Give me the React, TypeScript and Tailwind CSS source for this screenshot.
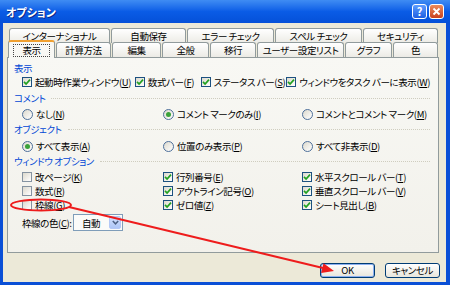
import clsx from 'clsx';

// label text with "&X" marking the mnemonic letter
function Mn({ t }: { t: string }) {
  const i = t.indexOf('&');
  if (i < 0) return <>{t}</>;
  return (
    <>
      {t.slice(0, i)}
      <span className="underline">{t[i + 1]}</span>
      {t.slice(i + 2)}
    </>
  );
}

function Check({ label, on, className }: { label: string; on?: boolean; className?: string }) {
  return (
    <div className={clsx('flex items-center gap-[3px]', className)}>
      <span
        className={clsx(
          'flex h-[10px] w-[10px] shrink-0 items-center justify-center border bg-linear-to-br from-[#dcd9cd] to-white',
          on ? 'border-[#1c5180]' : 'border-[#8593a1]'
        )}
      >
        {on && (
          <svg width="8" height="8" viewBox="0 0 8 8">
            <path d="M1 3.8 L3.1 6 L7 1.6" fill="none" stroke="#21a121" strokeWidth="1.7" />
          </svg>
        )}
      </span>
      <span className="whitespace-nowrap">
        <Mn t={label} />
      </span>
    </div>
  );
}

function Radio({ label, on, className }: { label: string; on?: boolean; className?: string }) {
  return (
    <div className={clsx('flex items-center gap-[3px]', className)}>
      <span className="flex h-[11px] w-[11px] shrink-0 items-center justify-center rounded-full border border-[#4d6f9a] bg-linear-to-br from-[#dcd9cd] to-white">
        {on && <span className="h-[5px] w-[5px] rounded-full bg-[#3aa23a]" />}
      </span>
      <span className="whitespace-nowrap">
        <Mn t={label} />
      </span>
    </div>
  );
}

function Group({ label, line = true, className }: { label: string; line?: boolean; className?: string }) {
  return (
    <div className={clsx('flex h-[14px] items-center gap-[6px] text-[#0046d5]', className)}>
      <span className="whitespace-nowrap">{label}</span>
      {line && <span className="flex-1 border-t border-dotted border-[#cfcdbf]" />}
    </div>
  );
}

const backTabs = [
  { label: 'インターナショナル', w: 'w-[101px]' },
  { label: '自動保存', w: 'w-[75px]' },
  { label: 'エラー チェック', w: 'w-[87px]' },
  { label: 'スペル チェック', w: 'w-[87px]' },
  { label: 'セキュリティ', w: 'w-[75px]' },
];

const frontTabs = [
  { label: '計算方法', w: 'w-[55px]' },
  { label: '編集', w: 'w-[49px]' },
  { label: '全般', w: 'w-[47px]' },
  { label: '移行', w: 'w-[46px]' },
  { label: 'ユーザー設定リスト', w: 'w-[87px]' },
  { label: 'グラフ', w: 'w-[47px]' },
  { label: '色', w: 'w-[45px]' },
];

const tabBase =
  'flex items-center justify-center whitespace-nowrap rounded-t-[3px] border border-b-0 border-[#919b9c] bg-linear-to-b from-white to-[#ecebe5]';

export default function App() {
  return (
    <div className="relative flex h-[285px] w-[450px] flex-col overflow-hidden bg-[#0a4fd6] font-['Noto_Sans_CJK_JP','Noto_Sans',sans-serif] text-[9.5px] leading-[14px] tracking-[-0.4px] text-black [font-feature-settings:'palt']">
      {/* Title bar */}
      <div className="flex h-[23px] shrink-0 items-center bg-linear-to-b from-[#3f8cf3] via-[#0a5ce6] to-[#0550d8] pl-[6px] pr-[6px]">
        <span className="flex-1 text-[11px] font-bold tracking-normal text-white [text-shadow:1px_1px_0_#0b2a8a]">オプション</span>
        <div className="flex gap-[2px]">
          <span className="flex h-[15px] w-[15px] items-center justify-center rounded-[3px] border border-white bg-linear-to-b from-[#5d9cff] to-[#1f5fe2] text-[11px] font-bold leading-none text-white">
            ?
          </span>
          <span className="flex h-[15px] w-[15px] items-center justify-center rounded-[3px] border border-white bg-linear-to-b from-[#eb8b5c] to-[#c8401c]">
            <svg width="9" height="9" viewBox="0 0 9 9">
              <path d="M1.5 1.5 L7.5 7.5 M7.5 1.5 L1.5 7.5" stroke="white" strokeWidth="1.8" />
            </svg>
          </span>
        </div>
      </div>

      {/* Dialog body */}
      <div className="ml-[3px] mr-[4px] flex h-[259px] flex-col bg-[#ece9d8] pt-[5px]">
        {/* back tab row */}
        <div className="flex h-[14px] gap-px pl-[6px]">
          {backTabs.map((t) => (
            <div key={t.label} className={clsx(tabBase, t.w, 'h-[15px]')}>
              {t.label}
            </div>
          ))}
        </div>
        {/* front tab row */}
        <div className="relative flex h-[15px] items-end gap-px pl-[5px]">
          <div className="relative z-10 mb-[-1px] flex h-[18px] w-[47px] items-center justify-center rounded-t-[3px] border-x border-t-2 border-[#919b9c] border-t-[#f0a030] bg-[#f8f8f4]">
            <span className="border border-dotted border-[#444] px-[8px] leading-[11px]">表示</span>
          </div>
          {frontTabs.map((t) => (
            <div key={t.label} className={clsx(tabBase, t.w, 'h-[15px]')}>
              {t.label}
            </div>
          ))}
        </div>

        {/* Tab page */}
        <div className="ml-[4px] flex h-[196px] w-[432px] flex-col border border-[#919b9c] bg-linear-to-b from-[#f8f8f4] to-[#f2f1eb] pl-[6px] pr-[8px] pt-[3px]">
          <Group label="表示" line={false} />
          <div className="flex h-[14px] items-center pl-[8px]">
            <Check on label="起動時作業ウィンドウ(&U)" className="w-[120px]" />
            <Check on label="数式バー(&F)" className="w-[70px]" />
            <Check on label="ステータス バー(&S)" className="w-[91px]" />
            <Check on label="ウィンドウをタスク バーに表示(&W)" />
          </div>

          <Group label="コメント" className="mt-[2px]" />
          <div className="mt-[2px] flex h-[14px] items-center pl-[8px]">
            <Radio label="なし(&N)" className="w-[141px]" />
            <Radio on label="コメント マークのみ(&I)" className="w-[139px]" />
            <Radio label="コメントとコメント マーク(&M)" />
          </div>

          <Group label="オブジェクト" className="mt-px" />
          <div className="mt-[3px] flex h-[14px] items-center pl-[8px]">
            <Radio on label="すべて表示(&A)" className="w-[141px]" />
            <Radio label="位置のみ表示(&P)" className="w-[139px]" />
            <Radio label="すべて非表示(&D)" />
          </div>

          <Group label="ウィンドウ オプション" className="mt-px" />
          <div className="mt-[2px] flex pl-[8px]">
            <div className="flex w-[141px] flex-col">
              <Check label="改ページ(&K)" className="h-[14px]" />
              <Check label="数式(&R)" className="h-[14px]" />
              <Check label="枠線(&G)" className="h-[14px]" />
            </div>
            <div className="flex w-[139px] flex-col">
              <Check on label="行列番号(&E)" className="h-[14px]" />
              <Check on label="アウトライン記号(&O)" className="h-[14px]" />
              <Check on label="ゼロ値(&Z)" className="h-[14px]" />
            </div>
            <div className="flex flex-col">
              <Check on label="水平スクロール バー(&T)" className="h-[14px]" />
              <Check on label="垂直スクロール バー(&V)" className="h-[14px]" />
              <Check on label="シート見出し(&B)" className="h-[14px]" />
            </div>
          </div>

          <div className="mt-[2px] flex h-[17px] items-center pl-[8px]">
            <span className="w-[51px] whitespace-nowrap">
              <Mn t="枠線の色(&C):" />
            </span>
            <div className="flex h-[17px] w-[50px] items-center border border-[#7f9db9] bg-[#fbfbf9]">
              <span className="flex-1 pl-[8px]">自動</span>
              <span className="mr-px flex h-[13px] w-[12px] items-center justify-center rounded-[2px] border border-[#b4c8f6] bg-linear-to-b from-[#d2e0fd] to-[#aec6f6]">
                <svg width="7" height="5" viewBox="0 0 7 5">
                  <path d="M0.8 1 L3.5 3.8 L6.2 1" fill="none" stroke="#4d6185" strokeWidth="1.5" />
                </svg>
              </span>
            </div>
          </div>
        </div>

        {/* Buttons */}
        <div className="mt-[10px] flex justify-end gap-[10px] pr-[6px]">
          <button className="flex h-[15px] w-[55px] items-center justify-center rounded-[3px] border border-[#003c74] bg-linear-to-b from-white to-[#e8e6dc] leading-none shadow-[inset_0_0_0_1px_#8cb0f0]">
            OK
          </button>
          <button className="flex h-[15px] w-[55px] items-center justify-center rounded-[3px] border border-[#003c74] bg-linear-to-b from-white to-[#e8e6dc] leading-none">
            キャンセル
          </button>
        </div>
      </div>

      {/* red annotation drawn over the dialog */}
      <svg className="pointer-events-none absolute left-0 top-0" width="450" height="285" viewBox="0 0 450 285">
        <ellipse cx="41" cy="205" rx="30" ry="5.5" fill="none" stroke="#ee1c1c" strokeWidth="2" />
        <path d="M69 207 L323 268" stroke="#ee1c1c" strokeWidth="2" />
        <polygon points="334,271 323.5,263.3 321.1,273.1" fill="#ee1c1c" />
      </svg>
    </div>
  );
}
